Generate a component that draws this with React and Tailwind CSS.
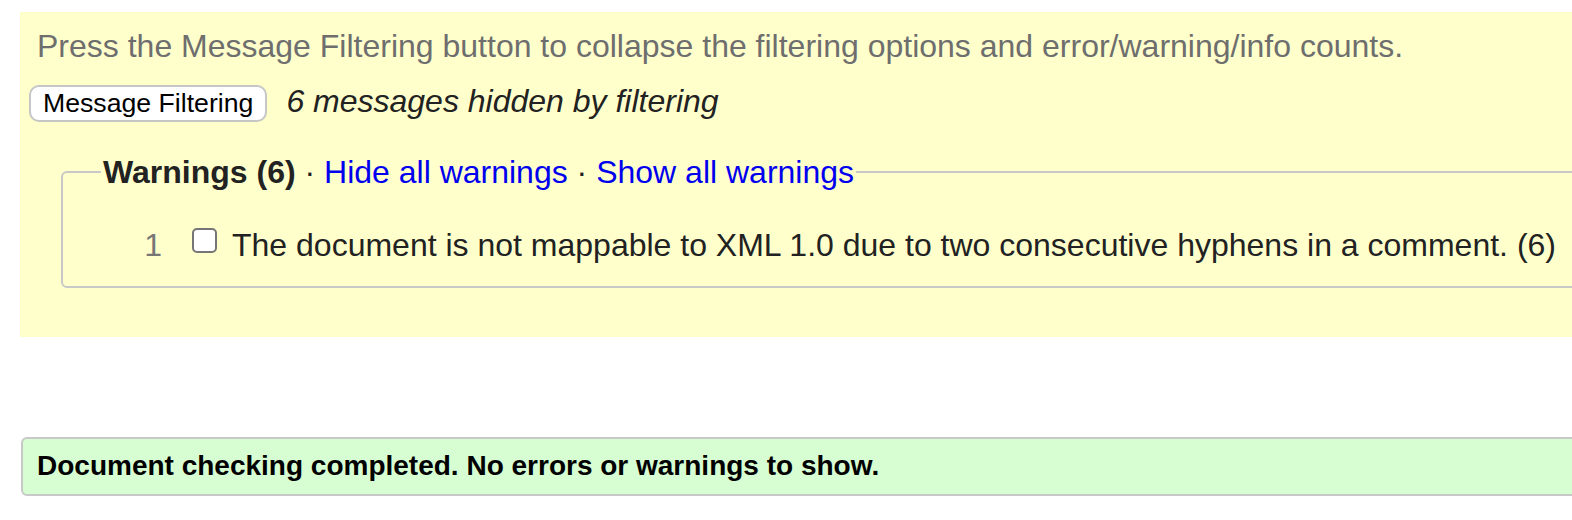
export default function App() {
  return (
    <div className="w-[1572px] h-[520px] overflow-hidden bg-white font-['Liberation_Sans',Arial,sans-serif]">
      <div className="w-[1640px]">
        {/* Filtering panel */}
        <section className="ml-[20px] mt-[12px] bg-[#ffffcc] pl-[9px] pt-[16px] pb-[49px]">
          <p className="pl-[8px] text-[32px] leading-[36px] text-[#6e6e6e]">
            Press the Message Filtering button to collapse the filtering options and error/warning/info counts.
          </p>
          <div className="mt-[19px] flex items-baseline">
            <button
              type="button"
              className="rounded-[10px] border-2 border-[#c6c6c6] bg-white px-[12px] py-[1px] text-[26.67px] leading-[31px] text-black"
            >
              Message Filtering
            </button>
            <span className="ml-[19px] text-[32px] leading-[36px] italic text-[#222]">
              6 messages hidden by filtering
            </span>
          </div>

          <fieldset className="ml-[32px] mr-[40px] mt-[32px] rounded-[6px] border-2 border-[#c8c8c8] pl-[38px] pt-[37px] pb-[23px]">
            <legend className="px-[2px] text-[32px] leading-[36px] text-[#222]">
              <strong className="font-bold">Warnings (6)</strong> ·{' '}
              <a href="#" className="text-[#0000ee]">Hide all warnings</a> ·{' '}
              <a href="#" className="text-[#0000ee]">Show all warnings</a>
            </legend>
            <div className="flex items-start text-[32px] leading-[36px]">
              <span className="w-[61px] text-right text-[#777]">1</span>
              <input
                type="checkbox"
                className="ml-[30px] mt-[1px] h-[25px] w-[25px] shrink-0 appearance-none rounded-[5px] border-2 border-[#767676] bg-white"
              />
              <span className="ml-[15px] text-[#222]">
                The document is not mappable to XML 1.0 due to two consecutive hyphens in a comment. (6)
              </span>
            </div>
          </fieldset>
        </section>

        {/* Result summary */}
        <div className="ml-[21px] mt-[100px] rounded-[6px] border-2 border-[#c8c8c8] bg-[#d7fdd2] pl-[14px] pt-[11px] pb-[12px]">
          <p className="text-[28px] leading-[32px] font-bold text-black">
            Document checking completed. No errors or warnings to show.
          </p>
        </div>
      </div>
    </div>
  );
}
